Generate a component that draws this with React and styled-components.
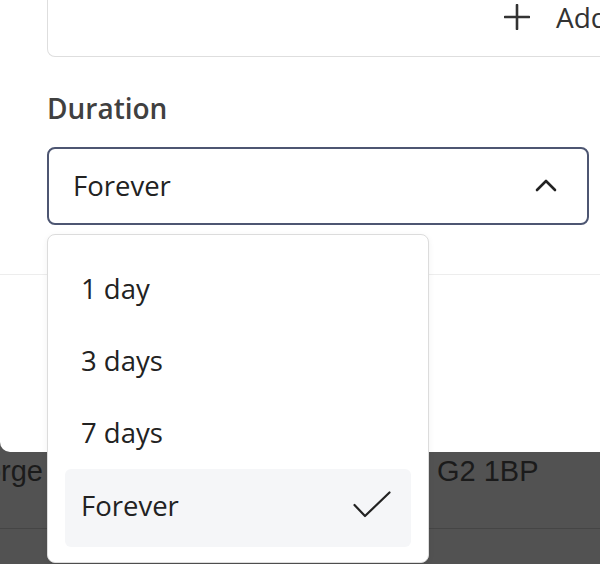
import React from "react";
import styled, { createGlobalStyle } from "styled-components";

const Global = createGlobalStyle`
  html, body { margin: 0; padding: 0; }
  body { background: #525252; font-family: "Open Sans", "Noto Sans", sans-serif; }
`;

const Page = styled.div`
  position: relative;
  width: 600px;
  height: 564px;
  overflow: hidden;
  background: #525252;
`;

const Modal = styled.div`
  height: 452px;
  background: #ffffff;
  border-bottom-left-radius: 10px;
  display: flex;
  flex-direction: column;
`;

const ModalBody = styled.div`
  padding-left: 47px;
  display: flex;
  flex-direction: column;
`;

const Card = styled.div`
  height: 56px;
  margin-right: -60px;
  border: 1px solid #dedede;
  border-top: none;
  border-radius: 0 0 8px 8px;
  display: flex;
  justify-content: flex-end;
  align-items: flex-start;
  padding-right: 51px;
`;

const AddButton = styled.div`
  display: flex;
  align-items: center;
  gap: 26px;
  height: 34px;
  font-size: 28px;
  color: #333;
  font-family: "Open Sans", sans-serif;
`;

const Label = styled.div`
  margin-top: 34px;
  font-size: 28px;
  line-height: 34px;
  font-weight: 600;
  color: #404040;
`;

const SelectBox = styled.div`
  margin-top: 22px;
  margin-right: 11px;
  height: 78px;
  box-sizing: border-box;
  border: 2px solid #4d5672;
  border-radius: 8px;
  display: flex;
  align-items: center;
  justify-content: space-between;
  padding: 0 30px 2px 24px;
  font-size: 27.5px;
  color: #222;
`;

const Divider = styled.div`
  margin-top: 49px;
  height: 1px;
  background: #ededed;
`;

const BgRow = styled.div`
  height: 74px;
  border-bottom: 1px solid #454545;
  display: flex;
  align-items: flex-start;
  padding-top: 2px;
  font-family: "Liberation Sans", Arial, sans-serif;
  font-size: 29px;
  line-height: 34px;
  color: #1b1b1b;
`;

const BgCell = styled.div`
  width: ${(p) => p.$w}px;
  margin-left: ${(p) => p.$ml || 0}px;
  display: flex;
  justify-content: ${(p) => (p.$end ? "flex-end" : "flex-start")};
  overflow: hidden;
  white-space: nowrap;
  flex-shrink: 0;
`;

const Dropdown = styled.div`
  position: absolute;
  top: 234px;
  left: 47px;
  width: 382px;
  height: 329px;
  box-sizing: border-box;
  background: #fff;
  border: 1px solid #dcdcdc;
  border-radius: 8px;
  box-shadow: 0 2px 6px rgba(0, 0, 0, 0.06);
  padding: 17px 17px 0 17px;
  display: flex;
  flex-direction: column;
`;

const Option = styled.div`
  height: ${(p) => (p.$selected ? 78 : 72)}px;
  margin-top: ${(p) => (p.$selected ? 1 : 0)}px;
  box-sizing: border-box;
  display: flex;
  align-items: center;
  justify-content: space-between;
  padding: 0 20px ${(p) => (p.$selected ? 6 : 0)}px 16px;
  border-radius: 6px;
  background: ${(p) => (p.$selected ? "#f5f6f8" : "transparent")};
  font-size: 27.5px;
  color: #222;
`;

const Chevron = () => (
  <svg width="22" height="14" viewBox="0 0 22 14" fill="none">
    <path d="M2 12 L11 3 L20 12" stroke="#222" strokeWidth="2.6" strokeLinecap="round" strokeLinejoin="round" />
  </svg>
);

const Check = () => (
  <svg width="38" height="28" viewBox="0 0 38 28" fill="none">
    <path d="M1.5 14 L12 25 L36.5 1.5" stroke="#222" strokeWidth="2.2" strokeLinecap="round" strokeLinejoin="round" />
  </svg>
);

const Plus = () => (
  <svg width="26" height="26" viewBox="0 0 26 26" fill="none">
    <path d="M13 1 V25 M1 13 H25" stroke="#333" strokeWidth="2.6" strokeLinecap="round" />
  </svg>
);

const options = ["1 day", "3 days", "7 days", "Forever"];

export default function App() {
  const selected = "Forever";
  return (
    <Page>
      <Global />
      <Modal>
        <ModalBody>
          <Card>
            <AddButton>
              <Plus />
              <span>Add</span>
            </AddButton>
          </Card>
          <Label>Duration</Label>
          <SelectBox>
            <span>{selected}</span>
            <Chevron />
          </SelectBox>
        </ModalBody>
        <Divider />
      </Modal>
      <BgRow>
        <BgCell $w={43} $end>George</BgCell>
        <BgCell $w={160} $ml={394}>G2 1BP</BgCell>
      </BgRow>
      <Dropdown>
        {options.map((o) => (
          <Option key={o} $selected={o === selected}>
            <span>{o}</span>
            {o === selected && <Check />}
          </Option>
        ))}
      </Dropdown>
    </Page>
  );
}
